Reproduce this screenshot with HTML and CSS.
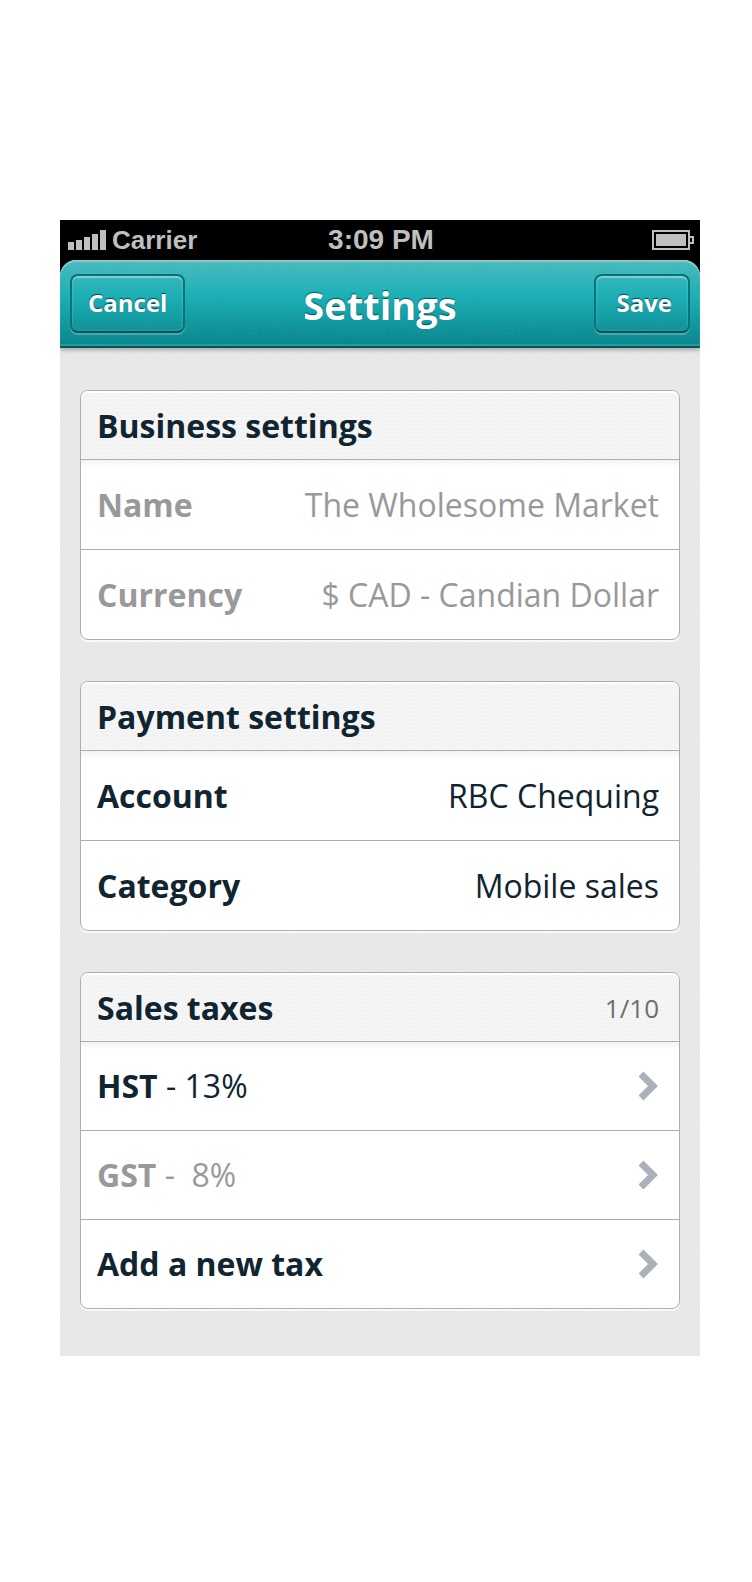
FILE: index.html
```html
<!DOCTYPE html>
<html lang="en">
<head>
<meta charset="utf-8">
<meta name="viewport" content="width=device-width, initial-scale=1">
<title>Settings</title>
<link rel="stylesheet" href="styles.css">
</head>
<body>
<div class="phone">
  <div class="status">
    <div class="status-left">
      <svg class="signal" viewBox="0 0 38 20" width="38" height="20" aria-hidden="true">
        <path d="M0 12h6v8H0zM8 10h6v10H8zM16 7h6v13h-6zM24 4h6v16h-6zM32 0h6v20h-6z"/>
      </svg>
      <span>Carrier</span>
    </div>
    <span class="clock">3:09 PM</span>
    <div class="status-right">
      <svg class="battery" viewBox="0 0 42 20" width="42" height="20" aria-hidden="true">
        <path class="battery-shell" d="M1 1h36v18H1zM37 7h4v6h-4"/>
        <path class="battery-level" d="M4 4h30v12H4z"/>
      </svg>
    </div>
  </div>

  <div class="screen">
    <header class="navbar">
      <button type="button" class="nav-button">Cancel</button>
      <h1 class="title">Settings</h1>
      <button type="submit" form="settings" class="nav-button nav-save">Save</button>
    </header>

    <form id="settings" class="content">
      <section class="card">
        <div class="card-head"><h2>Business settings</h2></div>
        <div class="row muted">
          <label for="name">Name</label>
          <input id="name" class="field" type="text" value="The Wholesome Market">
        </div>
        <div class="row muted">
          <label for="currency">Currency</label>
          <select id="currency" class="field"><option>$ CAD - Candian Dollar</option></select>
        </div>
      </section>

      <section class="card">
        <div class="card-head"><h2>Payment settings</h2></div>
        <div class="row">
          <label for="account">Account</label>
          <select id="account" class="field"><option>RBC Chequing</option></select>
        </div>
        <div class="row">
          <label for="category">Category</label>
          <select id="category" class="field"><option>Mobile sales</option></select>
        </div>
      </section>

      <section class="card">
        <div class="card-head"><h2>Sales taxes</h2><span class="count">1/10</span></div>
        <a class="row tax" href="#hst">
          <span><b>HST</b> - 13%</span>
          <svg class="chevron" viewBox="0 0 20 30" width="20" height="30" aria-hidden="true"><path d="M2 3l12 12L2 27"/></svg>
        </a>
        <a class="row tax muted" href="#gst">
          <span><b>GST</b> -&nbsp; 8%</span>
          <svg class="chevron" viewBox="0 0 20 30" width="20" height="30" aria-hidden="true"><path d="M2 3l12 12L2 27"/></svg>
        </a>
        <a class="row tax" href="#new-tax">
          <b>Add a new tax</b>
          <svg class="chevron" viewBox="0 0 20 30" width="20" height="30" aria-hidden="true"><path d="M2 3l12 12L2 27"/></svg>
        </a>
      </section>
    </form>
  </div>
</div>
</body>
</html>
```
FILE: styles.css
```css
* {
  box-sizing: border-box;
}

body {
  margin: 0;
  padding: 220px 52px 226px 60px;
  background: #fff;
  color: #112531;
  font-family: "Open Sans", "Noto Sans", sans-serif;
  font-size: 32px;
  line-height: 44px;
}

h1,
h2 {
  margin: 0;
  font-size: inherit;
}

.phone {
  background: #000;
}

/* Status bar */
.status {
  display: grid;
  grid-template-columns: 1fr auto 1fr;
  align-items: center;
  height: 40px;
  padding: 0 6px 0 8px;
  color: #bfbfbf;
  font-family: "Liberation Sans", Arial, sans-serif;
  font-size: 28px;
  font-weight: 700;
  line-height: 40px;
}

.status-left {
  display: flex;
  align-items: center;
  gap: 6px;
}

.status-left span {
  font-size: 26px;
}

.status-right {
  display: flex;
  justify-content: flex-end;
}

.signal,
.battery-level {
  fill: #bfbfbf;
}

.battery-shell {
  fill: none;
  stroke: #bfbfbf;
  stroke-width: 2;
}

/* Navigation bar */
.screen {
  border-radius: 16px 16px 0 0;
  overflow: hidden;
  background: #e9e9e9 url("data:image/svg+xml,%3Csvg xmlns='http://www.w3.org/2000/svg' width='128' height='128'%3E%3Cfilter id='n'%3E%3CfeTurbulence type='fractalNoise' baseFrequency='.5' numOctaves='2' stitchTiles='stitch'/%3E%3CfeColorMatrix type='saturate' values='0'/%3E%3C/filter%3E%3Crect width='128' height='128' filter='url(%23n)' opacity='.06'/%3E%3C/svg%3E");
}

.navbar {
  position: relative;
  display: grid;
  grid-template-columns: 1fr auto 1fr;
  align-items: center;
  height: 88px;
  padding: 0 10px;
  border-bottom: 2px solid #06545b;
  border-radius: 16px 16px 0 0;
  background:
    url("data:image/svg+xml,%3Csvg xmlns='http://www.w3.org/2000/svg' width='128' height='128'%3E%3Cfilter id='n'%3E%3CfeTurbulence type='fractalNoise' baseFrequency='.5' numOctaves='2' stitchTiles='stitch'/%3E%3CfeColorMatrix type='saturate' values='0'/%3E%3C/filter%3E%3Crect width='128' height='128' filter='url(%23n)' opacity='.1'/%3E%3C/svg%3E"),
    linear-gradient(#46babe, #14b0b6 40%, #008289);
  box-shadow:
    inset 0 2px 1px #84ced0,
    inset 0 -2px 0 #259ba1,
    0 2px 4px rgba(0, 0, 0, .3);
}

.title {
  padding-top: 4px;
  color: #fff;
  font-size: 38px;
  line-height: 52px;
  text-shadow: 0 -1px 1px rgba(0, 60, 66, .8);
}

.nav-button {
  justify-self: start;
  height: 59px;
  padding: 0 16px;
  border: 2px solid #08727a;
  border-bottom-color: #06545b;
  border-radius: 8px;
  background: transparent;
  box-shadow:
    inset 0 2px 1px rgba(255, 255, 255, .35),
    inset 0 0 2px rgba(255, 255, 255, .3),
    0 2px 1px rgba(255, 255, 255, .25);
  color: #fff;
  font: 700 24px/32px "Open Sans", "Noto Sans", sans-serif;
  text-shadow: 0 -1px 1px rgba(0, 60, 66, .9);
}

.nav-save {
  justify-self: end;
  padding-left: 20px;
}

/* Setting groups */
.content {
  display: flex;
  flex-direction: column;
  gap: 41px;
  padding: 42px 20px 47px;
}

.card {
  border: 1px solid #adadad;
  border-radius: 8px;
  background: #fff;
  box-shadow: 0 2px 0 #fafafa;
}

.card-head {
  display: flex;
  align-items: center;
  justify-content: space-between;
  height: 68px;
  padding: 2px 20px 0 16px;
  border-radius: 7px 7px 0 0;
  background: #f5f5f5 url("data:image/svg+xml,%3Csvg xmlns='http://www.w3.org/2000/svg' width='12' height='4'%3E%3Cpath d='M0 1q3 0 6 1t6-1' fill='none' stroke='%23f0f0f0'/%3E%3C/svg%3E");
  box-shadow: inset 0 2px 0 #fff;
}

.count {
  color: #6d6d6d;
  font-size: 26px;
}

.row {
  display: flex;
  align-items: center;
  justify-content: space-between;
  height: 90px;
  padding: 0 20px 0 16px;
  border-top: 1px solid #adadad;
  color: inherit;
  text-decoration: none;
}

.card-head + .row {
  background: linear-gradient(#f3f3f3, #fff 8px);
}

.row.tax {
  height: 89px;
}

.row:last-child {
  border-radius: 0 0 7px 7px;
}

.row label,
.row b {
  font-weight: 700;
}

.row.muted {
  color: #999;
}

.field {
  flex: 1;
  min-width: 0;
  height: 48px;
  margin: 0;
  padding: 0;
  border: 0;
  background: transparent;
  color: inherit;
  font: inherit;
  text-align: right;
  text-align-last: right;
  appearance: none;
}

.chevron {
  fill: none;
  stroke: #abb1ba;
  stroke-width: 7;
}
```
